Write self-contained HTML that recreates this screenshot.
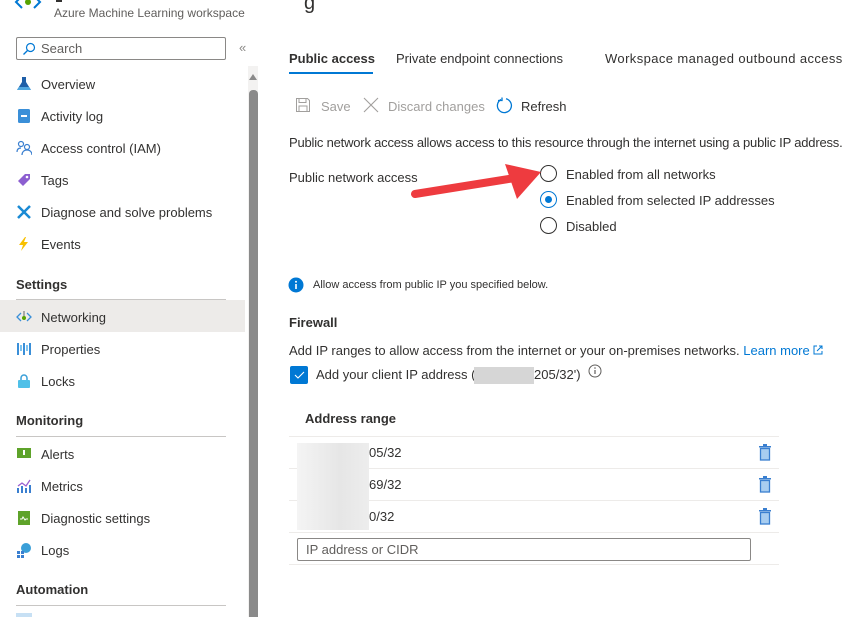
<!DOCTYPE html>
<html><head><meta charset="utf-8"><style>
*{margin:0;padding:0;box-sizing:border-box}
body{width:854px;height:617px;overflow:hidden;background:#fff;font-family:"Liberation Sans",sans-serif;font-size:13px;color:#323130;position:relative}
.a{position:absolute;white-space:nowrap}
.ni{position:absolute;left:41px;font-size:13px}
.ic{position:absolute;left:16px;width:16px;height:16px}
.h{position:absolute;left:16px;font-weight:bold;font-size:13px}
.ln{position:absolute;left:16px;width:210px;height:1px;background:#c8c6c4}
.rad{position:absolute;left:540px;width:17px;height:17px;border:1.3px solid #323130;border-radius:50%}
.row{position:absolute;left:289px;width:490px;height:1px;background:#edebe9}
.tr{position:absolute;left:758px}
</style></head><body>
<svg class="a" style="left:14px;top:-6px" width="28" height="16"><path d="M8 2 L2 8 L8 14" stroke="#0078d4" stroke-width="2" fill="none"/><path d="M20 2 L26 8 L20 14" stroke="#0078d4" stroke-width="2" fill="none"/><circle cx="14" cy="8" r="3" fill="#57a300"/></svg>
<div class="a" style="left:56px;top:-4px;width:6px;height:6px;background:#323130"></div>
<div class="a" style="left:54px;top:6px;font-size:12px;color:#605e5c">Azure Machine Learning workspace</div>
<div class="a" style="left:16px;top:37px;width:210px;height:23px;border:1px solid #8a8886;border-radius:2px"></div>
<svg class="a" style="left:22px;top:42px" width="14" height="14"><circle cx="8.5" cy="5.5" r="4" stroke="#0078d4" fill="none" stroke-width="1.2"/><path d="M5.5 8.5 L1.5 12.5" stroke="#0078d4" stroke-width="1.3"/></svg>
<div class="a" style="left:41px;top:41px;color:#605e5c">Search</div>
<div class="a" style="left:239px;top:40px;color:#8a8886;font-size:13px">«</div>
<div class="a" style="left:248px;top:66px;width:10px;height:551px;background:#f3f2f1"></div>
<div class="a" style="left:249px;top:90px;width:9px;height:527px;background:#8a8a8a;border-radius:4px 4px 0 0"></div>
<div class="a" style="left:249px;top:74px;width:0;height:0;border-left:4.5px solid transparent;border-right:4.5px solid transparent;border-bottom:6px solid #8a8a8a"></div>
<svg class="ic" style="top:76px"><path d="M5 1h6M6 1v5L1 14h14L10 6V1" fill="#1f5fa8"/><path d="M3 11h10l2 3H1z" fill="#50a7e0"/></svg>
<div class="ni" style="top:77px">Overview</div>
<svg class="ic" style="top:108px"><rect x="2" y="1" width="12" height="14" rx="1.5" fill="#3a8fd8"/><rect x="5" y="7" width="6" height="2" fill="#fff"/></svg>
<div class="ni" style="top:109px">Activity log</div>
<svg class="ic" style="top:140px"><circle cx="5" cy="4" r="2.5" fill="none" stroke="#3a7fd0" stroke-width="1.2"/><circle cx="11" cy="7" r="2.5" fill="none" stroke="#3a7fd0" stroke-width="1.2"/><path d="M1 12c0-3 2-4 4-4M6 15c0-3 2-5 5-5s5 2 5 5" fill="none" stroke="#3a7fd0" stroke-width="1.2"/></svg>
<div class="ni" style="top:141px">Access control (IAM)</div>
<svg class="ic" style="top:172px"><path d="M2 9L9 2h5v5l-7 7z" fill="#8c5fd0"/><circle cx="11" cy="5" r="1.3" fill="#fff"/></svg>
<div class="ni" style="top:173px">Tags</div>
<svg class="ic" style="top:204px"><path d="M2 14L14 2M2 2l12 12" stroke="#1a8ad4" stroke-width="2.5"/></svg>
<div class="ni" style="top:205px">Diagnose and solve problems</div>
<svg class="ic" style="top:236px"><path d="M9 1L3 9h4l-2 6 7-9H8l2-5z" fill="#f8c000"/></svg>
<div class="ni" style="top:237px">Events</div>
<div class="h" style="top:277px">Settings</div>
<div class="ln" style="top:299px"></div>
<div class="a" style="left:0;top:300px;width:245px;height:32px;background:#edebe9"></div>
<svg class="ic" style="top:309px"><path d="M5 4L1 8l4 4M11 4l4 4-4 4" stroke="#3a8fd8" stroke-width="1.3" fill="none"/><path d="M8 2v5" stroke="#666" stroke-width="1"/><circle cx="8" cy="9" r="2" fill="#57a300"/></svg>
<div class="ni" style="top:310px">Networking</div>
<svg class="ic" style="top:341px"><rect x="1" y="2" width="2" height="12" fill="#3a8fd8"/><rect x="7" y="2" width="2" height="12" fill="#3a8fd8"/><rect x="13" y="2" width="2" height="12" fill="#3a8fd8"/><rect x="4" y="4" width="2" height="6" fill="#7fc4f0"/><rect x="10" y="4" width="2" height="6" fill="#7fc4f0"/></svg>
<div class="ni" style="top:342px">Properties</div>
<svg class="ic" style="top:373px"><path d="M5 7V5a3 3 0 016 0v2" stroke="#3a9fd8" stroke-width="1.5" fill="none"/><rect x="2" y="7" width="12" height="8" rx="1" fill="#4fc0e8"/></svg>
<div class="ni" style="top:374px">Locks</div>
<div class="h" style="top:413px">Monitoring</div>
<div class="ln" style="top:436px"></div>
<svg class="ic" style="top:446px"><rect x="1" y="2" width="14" height="10" fill="#5ea32a"/><rect x="7" y="4" width="2" height="5" fill="#fff"/></svg>
<div class="ni" style="top:447px">Alerts</div>
<svg class="ic" style="top:478px"><rect x="1" y="10" width="2" height="5" fill="#3a7fd0"/><rect x="5" y="8" width="2" height="7" fill="#3a7fd0"/><rect x="9" y="10" width="2" height="5" fill="#3a7fd0"/><rect x="13" y="7" width="2" height="8" fill="#3a7fd0"/><path d="M2 8l4-3 4 3 4-6" stroke="#9a5fd0" stroke-width="1.3" fill="none"/></svg>
<div class="ni" style="top:479px">Metrics</div>
<svg class="ic" style="top:510px"><rect x="2" y="1" width="12" height="14" fill="#5ea32a"/><path d="M4 9h2l1-2 2 3 1-1h2" stroke="#fff" fill="none"/></svg>
<div class="ni" style="top:511px">Diagnostic settings</div>
<svg class="ic" style="top:542px"><circle cx="10" cy="6" r="5" fill="#3a9fd8"/><rect x="1" y="9" width="3" height="3" fill="#3a7fd0"/><rect x="5" y="9" width="3" height="3" fill="#3a7fd0"/><rect x="1" y="13" width="3" height="3" fill="#3a7fd0"/><rect x="5" y="13" width="3" height="3" fill="#3a7fd0"/></svg>
<div class="ni" style="top:543px">Logs</div>
<div class="h" style="top:582px">Automation</div>
<div class="ln" style="top:605px"></div>
<div class="a" style="left:16px;top:613px;width:16px;height:4px;background:#c7e0f4"></div>
<div class="a" style="left:304px;top:-8px;font-size:20px;color:#323130">g</div>
<div class="a" style="left:289px;top:51px;font-weight:bold">Public access</div>
<div class="a" style="left:289px;top:72px;width:84px;height:2px;background:#0078d4"></div>
<div class="a" style="left:396px;top:51px">Private endpoint connections</div>
<div class="a" style="left:605px;top:51px;letter-spacing:0.4px">Workspace managed outbound access</div>
<svg class="a" style="left:295px;top:97px" width="16" height="16"><path d="M1.5 1.5h11l2 2v11h-13z" stroke="#a19f9d" fill="none"/><rect x="4" y="1.5" width="7" height="4" stroke="#a19f9d" fill="none"/><rect x="4" y="9" width="8" height="5.5" stroke="#a19f9d" fill="none"/></svg>
<div class="a" style="left:321px;top:99px;color:#a19f9d">Save</div>
<svg class="a" style="left:363px;top:97px" width="16" height="16"><path d="M1 1l14 14M15 1L1 15" stroke="#a19f9d" stroke-width="1.1"/></svg>
<div class="a" style="left:388px;top:99px;color:#a19f9d">Discard changes</div>
<svg class="a" style="left:496px;top:97px" width="17" height="17"><path d="M5 2.5A7 7 0 1 0 10 1.8" stroke="#0078d4" stroke-width="1.3" fill="none"/><path d="M2 2.5h4v-3" stroke="#0078d4" stroke-width="1.3" fill="none" transform="translate(0,1)"/></svg>
<div class="a" style="left:521px;top:99px">Refresh</div>
<div class="a" style="left:289px;top:135px;letter-spacing:-0.2px">Public network access allows access to this resource through the internet using a public IP address.</div>
<div class="a" style="left:289px;top:170px">Public network access</div>
<div class="rad" style="top:165px"></div>
<div class="a" style="left:566px;top:167px">Enabled from all networks</div>
<div class="rad" style="top:191px;border-color:#0078d4"><div style="position:absolute;left:3.5px;top:3.5px;width:7.5px;height:7.5px;border-radius:50%;background:#0078d4"></div></div>
<div class="a" style="left:566px;top:193px">Enabled from selected IP addresses</div>
<div class="rad" style="top:217px"></div>
<div class="a" style="left:566px;top:219px">Disabled</div>
<svg class="a" style="left:405px;top:155px" width="145" height="50"><path d="M10 39 L110 23" stroke="#ee3b3f" stroke-width="8" stroke-linecap="round"/><path d="M100 9 L136 17 L112 44 Z" fill="#ee3b3f"/></svg>
<svg class="a" style="left:288px;top:277px" width="16" height="16"><circle cx="8" cy="8" r="7.5" fill="#0078d4"/><rect x="7.2" y="7" width="1.6" height="5" fill="#fff"/><circle cx="8" cy="4.8" r="1" fill="#fff"/></svg>
<div class="a" style="left:313px;top:279px;font-size:11px">Allow access from public IP you specified below.</div>
<div class="a" style="left:289px;top:315px;font-weight:bold">Firewall</div>
<div class="a" style="left:289px;top:343px">Add IP ranges to allow access from the internet or your on-premises networks. <span style="color:#0078d4">Learn more</span></div>
<svg class="a" style="left:813px;top:345px" width="10" height="10"><path d="M4 1H1v8h8V6M6 1h3v3M9 1L4 6" stroke="#0078d4" fill="none"/></svg>
<div class="a" style="left:290px;top:366px;width:18px;height:18px;background:#0078d4;border-radius:2px"></div>
<svg class="a" style="left:293px;top:369px" width="12" height="12"><path d="M2 6l3 3 6-6" stroke="#fff" stroke-width="1.1" fill="none"/></svg>
<div class="a" style="left:316px;top:367px">Add your client IP address (</div>
<div class="a" style="left:474px;top:367px;width:60px;height:17px;background:#d6d6d6"></div>
<div class="a" style="left:534px;top:367px">205/32')</div>
<svg class="a" style="left:588px;top:364px" width="14" height="14"><circle cx="7" cy="7" r="6" stroke="#605e5c" fill="none"/><rect x="6.4" y="6" width="1.2" height="4" fill="#605e5c"/><circle cx="7" cy="4" r=".8" fill="#605e5c"/></svg>
<div class="a" style="left:305px;top:411px;font-weight:bold">Address range</div>
<div class="row" style="top:436px"></div>
<div class="row" style="top:468px"></div>
<div class="row" style="top:500px"></div>
<div class="row" style="top:532px"></div>
<div class="row" style="top:564px"></div>
<div class="a" style="left:297px;top:443px;width:72px;height:87px;background:linear-gradient(90deg,#f4f4f4,#e6e6e6 60%,#ededed)"></div>
<div class="a" style="left:369px;top:445px">05/32</div>
<div class="a" style="left:369px;top:477px">69/32</div>
<div class="a" style="left:369px;top:509px">0/32</div>
<svg class="tr" style="top:444px" width="14" height="17"><rect x="1" y="2" width="12" height="1.5" fill="#3a7fd0"/><rect x="5" y="0" width="4" height="2" fill="#3a7fd0"/><rect x="2.5" y="4.5" width="9" height="11.5" stroke="#3a7fd0" stroke-width="1.3" fill="#a8cdf0"/></svg>
<svg class="tr" style="top:476px" width="14" height="17"><rect x="1" y="2" width="12" height="1.5" fill="#3a7fd0"/><rect x="5" y="0" width="4" height="2" fill="#3a7fd0"/><rect x="2.5" y="4.5" width="9" height="11.5" stroke="#3a7fd0" stroke-width="1.3" fill="#a8cdf0"/></svg>
<svg class="tr" style="top:508px" width="14" height="17"><rect x="1" y="2" width="12" height="1.5" fill="#3a7fd0"/><rect x="5" y="0" width="4" height="2" fill="#3a7fd0"/><rect x="2.5" y="4.5" width="9" height="11.5" stroke="#3a7fd0" stroke-width="1.3" fill="#a8cdf0"/></svg>
<div class="a" style="left:297px;top:538px;width:454px;height:23px;border:1px solid #8a8886;border-radius:2px"></div>
<div class="a" style="left:306px;top:542px;color:#605e5c">IP address or CIDR</div>
</body></html>
